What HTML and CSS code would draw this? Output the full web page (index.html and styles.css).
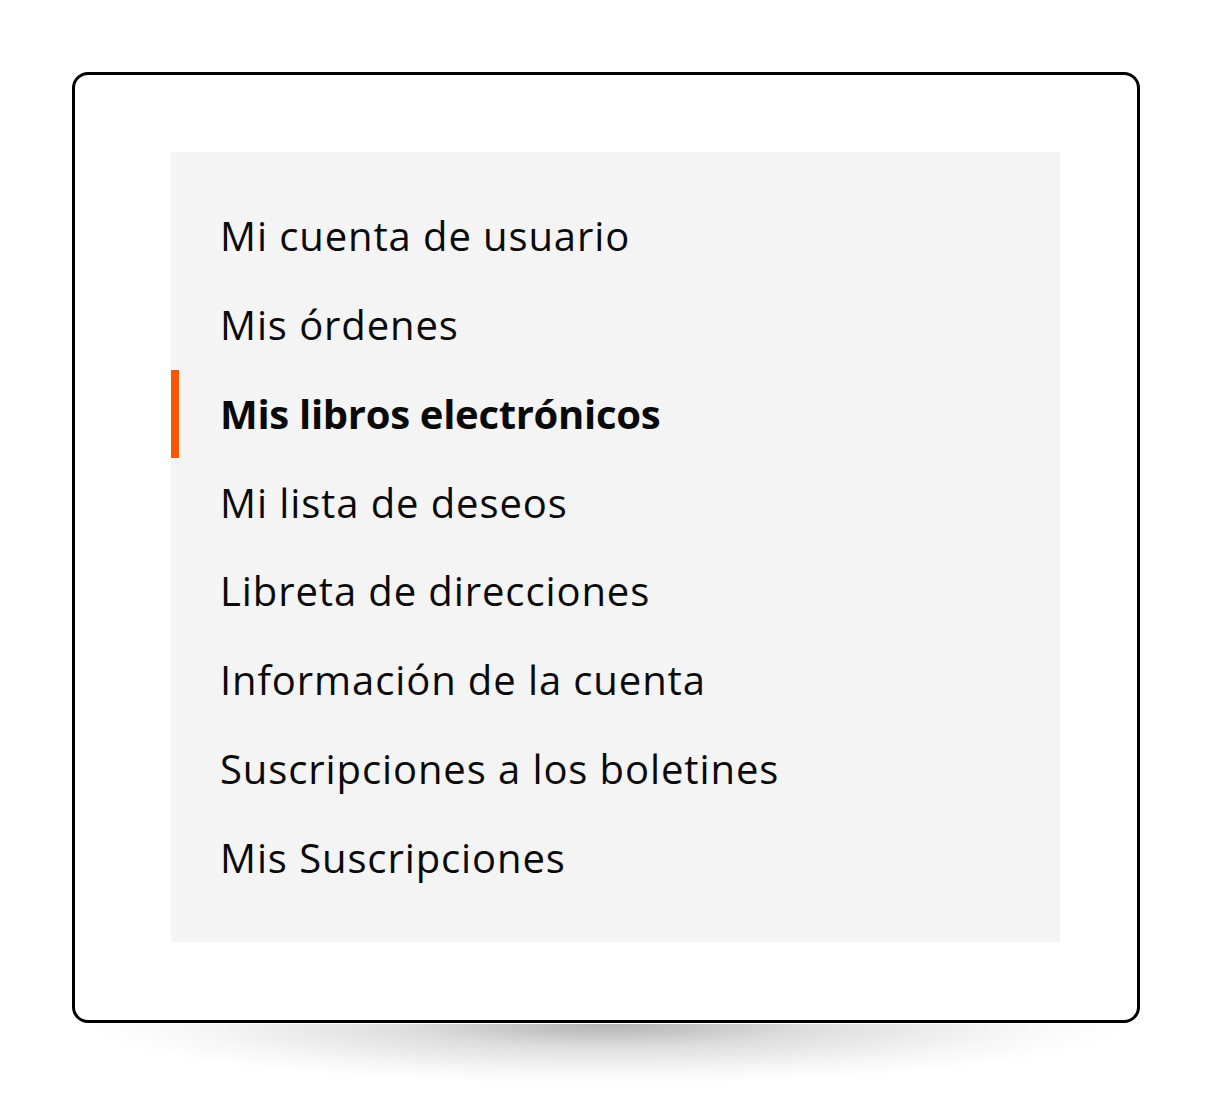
FILE: index.html
```html
<!DOCTYPE html>
<html lang="es">
<head>
<meta charset="utf-8">
<title>Mi cuenta</title>
<link rel="stylesheet" href="styles.css">
</head>
<body>
<div class="frame">
  <nav class="panel">
    <ul class="menu">
      <li class="item"><a href="#">Mi cuenta de usuario</a></li>
      <li class="item"><a href="#">Mis órdenes</a></li>
      <li class="item active"><a href="#">Mis libros electrónicos</a></li>
      <li class="item"><a href="#">Mi lista de deseos</a></li>
      <li class="item"><a href="#">Libreta de direcciones</a></li>
      <li class="item"><a href="#">Información de la cuenta</a></li>
      <li class="item"><a href="#">Suscripciones a los boletines</a></li>
      <li class="item"><a href="#">Mis Suscripciones</a></li>
    </ul>
  </nav>
</div>
<div class="shadow"></div>
</body>
</html>
```
FILE: styles.css
```css
html {
  background: #ffffff;
}
html, body {
  margin: 0;
  padding: 0;
}
body {
  padding: 72px 0 0 0;
  font-family: "Open Sans", "Noto Sans", sans-serif;
}
.frame {
  box-sizing: border-box;
  width: 1068px;
  height: 951px;
  margin-left: 72px;
  border: 3px solid #000;
  border-radius: 16px;
  background: #fff;
  padding: 77px 77px 78px 96px;
}
.shadow {
  width: 1214px;
  height: 66px;
  margin-top: 1px;
  background-image: radial-gradient(ellipse 520px 60px at 606px 0px, rgba(0,0,0,0.30) 0%, rgba(0,0,0,0.13) 40%, rgba(0,0,0,0.03) 80%, rgba(0,0,0,0) 100%);
}
.panel {
  background: #f4f4f4;
  height: 100%;
  box-sizing: border-box;
  padding-top: 40px;
}
.menu {
  list-style: none;
  margin: 0;
  padding: 0;
}
.item {
  height: 88.75px;
  display: flex;
  align-items: center;
  padding-left: 49px;
  box-sizing: border-box;
}
.item.active {
  border-left: 8px solid #ff5500;
  padding-left: 41px;
}
.item a {
  color: #0a0a0a;
  text-decoration: none;
  font-size: 40px;
  letter-spacing: 0.9px;
  line-height: 1;
}
.item.active a {
  font-weight: 700;
  letter-spacing: -0.3px;
}
```
